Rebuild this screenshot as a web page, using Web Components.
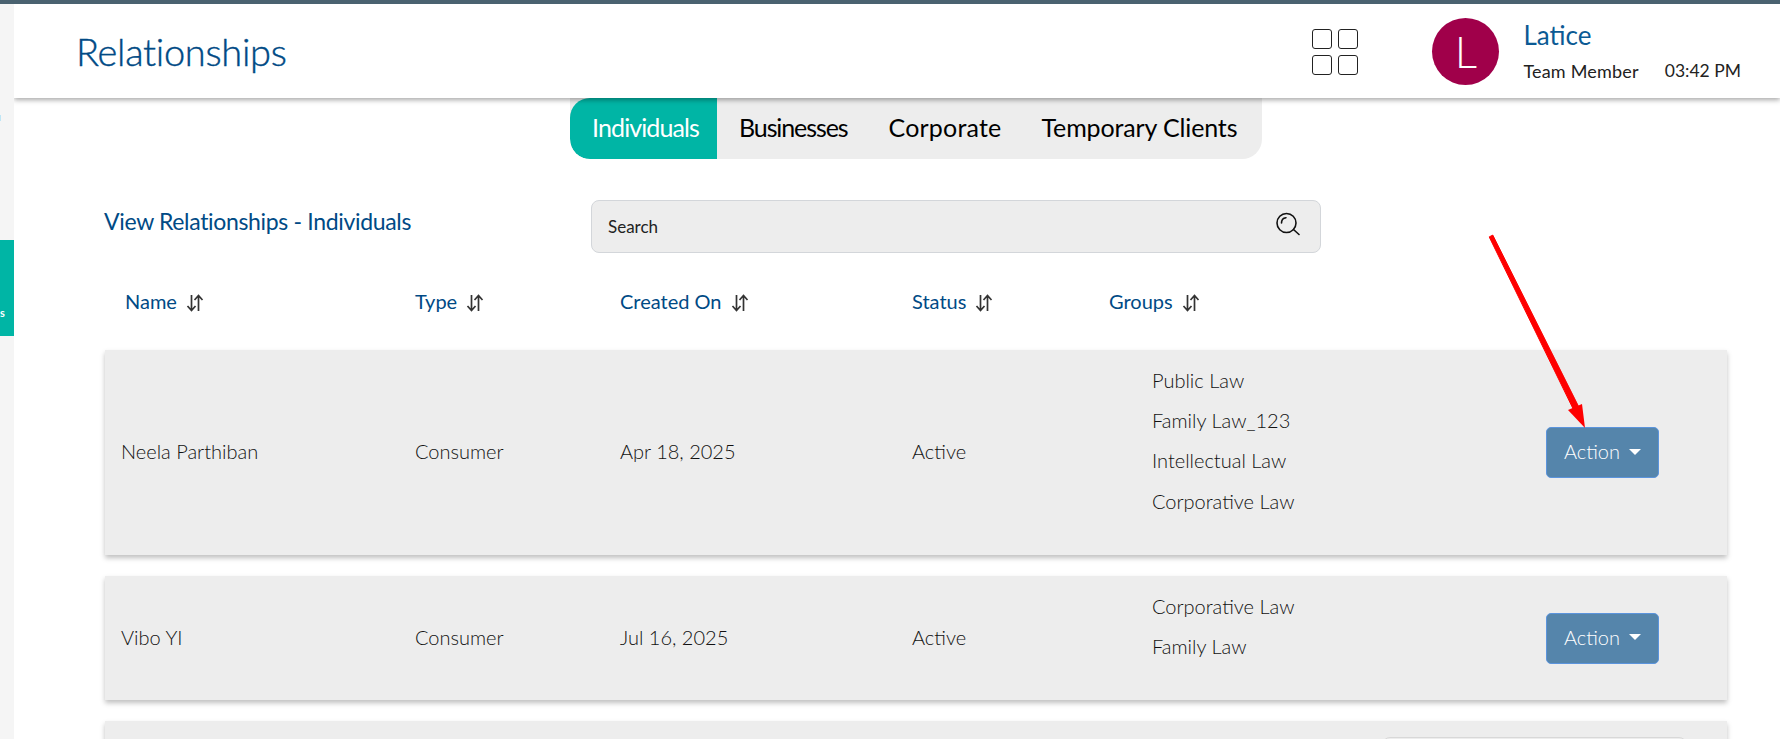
<!DOCTYPE html>
<html>
<head>
<meta charset="utf-8">
<style>
  html,body{margin:0;height:739px;overflow:hidden;background:#fff;font-family:"Lato","Open Sans",sans-serif}
</style>
</head>
<body>
<rel-page>
  <rel-header slot="header" title-text="Relationships" user="Latice" role="Team Member" time="03:42 PM"></rel-header>
  <rel-tabs slot="tabs"></rel-tabs>
  <rel-toolbar slot="toolbar"></rel-toolbar>
  <rel-columns slot="columns"></rel-columns>
  <rel-row name="Neela Parthiban" type="Consumer" date="Apr 18, 2025" status="Active" groups="Public Law|Family Law_123|Intellectual Law|Corporative Law" height="205"></rel-row>
  <rel-row name="Vibo YI" type="Consumer" date="Jul 16, 2025" status="Active" groups="Corporative Law|Family Law" height="124"></rel-row>
  <rel-row height="124" partial></rel-row>
</rel-page>

<script>
const sortIcon = `<svg width="18" height="20" viewBox="0 0 18 20" fill="none" stroke="#333" stroke-width="1.7"><path d="M5.500 2v15M1.500 13l4 4.500 4-4.500"/><path d="M12.500 18V3M8.500 7l4-4.500 4 4.500"/></svg>`;

class RelPage extends HTMLElement {
  constructor() {
    super();
    this.attachShadow({ mode: 'open' });
    this.shadowRoot.innerHTML = `
    <style>
      :host{display:flex;height:739px;overflow:hidden;position:relative;border-top:4px solid #4a6270;box-sizing:border-box}
      .side{width:14px;flex:none;background:#f5f5f5;padding-top:236px;box-sizing:border-box;position:relative;z-index:3}
      .side div{height:96px;background:#00b5a5;color:#fff;font:bold 11px "Lato",sans-serif;display:flex;align-items:flex-end;padding-bottom:17px;box-sizing:border-box;overflow:hidden}
      .side b{position:absolute;left:0;top:111px;width:1px;height:6px;background:#bfe6f5}
      .main{flex:1;min-width:0;display:flex;flex-direction:column}
      .rows{display:flex;flex-direction:column;gap:21px;padding:0 53px 0 91px;flex:none}
      svg.arrow{position:absolute;left:0;top:-4px;pointer-events:none;z-index:4}
    </style>
    <div class="side"><b></b><div>s</div></div>
    <div class="main">
      <slot name="header"></slot>
      <slot name="tabs"></slot>
      <slot name="toolbar"></slot>
      <slot name="columns"></slot>
      <div class="rows"><slot></slot></div>
    </div>
    <svg class="arrow" width="1780" height="739" viewBox="0 0 1780 739">
      <path d="M1489.200 236.900L1492.800 235.100L1579.700 408.700L1574.300 411.300Z" fill="#fe0000" stroke="#fe0000" stroke-width="1" stroke-linejoin="round"/>
      <path d="M1568 410L1582 404L1585 428Z" fill="#fe0000"/>
    </svg>`;
  }
}

class RelHeader extends HTMLElement {
  constructor() {
    super();
    this.attachShadow({ mode: 'open' });
    this.shadowRoot.innerHTML = `
    <style>
      :host{display:flex;align-items:center;flex:none;height:94px;background:#fff;box-shadow:0 2px 5px rgba(0,0,0,.35);position:relative;z-index:2;padding:0 39px 0 62px;box-sizing:border-box}
      h1{margin:0;font:300 38px "Lato",sans-serif;color:#004a85;flex:1;letter-spacing:-.3px;-webkit-text-stroke:.4px #004a85}
      .grid{display:grid;grid-template-columns:20px 20px;gap:6px;margin-right:74px;position:relative;top:1px}
      .grid i{display:block;width:20px;height:20px;border:1.5px solid #222;border-radius:3px;box-sizing:border-box}
      .avatar{width:67px;height:67px;border-radius:50%;background:#a0004a;color:#fff;font:300 44px "Lato",sans-serif;display:flex;align-items:center;justify-content:center;margin-right:24px}
      .who{display:flex;flex-direction:column;gap:10px}
      .name{font:400 26px/30px "Lato",sans-serif;color:#0b5a94}
      .meta{display:flex;gap:26px;font:400 18px/22px "Lato",sans-serif;color:#222}
      .role{letter-spacing:.2px}
      .time{font-size:17.500px}
    </style>
    <h1></h1>
    <div class="grid"><i></i><i></i><i></i><i></i></div>
    <div class="avatar"></div>
    <div class="who"><div class="name"></div><div class="meta"><span class="role"></span><span class="time"></span></div></div>`;
  }
  connectedCallback() {
    const r = this.shadowRoot;
    r.querySelector('h1').textContent = this.getAttribute('title-text');
    const u = this.getAttribute('user');
    r.querySelector('.avatar').textContent = u[0];
    r.querySelector('.name').textContent = u;
    r.querySelector('.role').textContent = this.getAttribute('role');
    r.querySelector('.time').textContent = this.getAttribute('time');
  }
}

class RelTabs extends HTMLElement {
  constructor() {
    super();
    this.attachShadow({ mode: 'open' });
    this.shadowRoot.innerHTML = `
    <style>
      :host{display:flex;flex:none;padding-left:556px}
      .bar{display:flex;width:692px;height:61px;background:#ededed;border-radius:0 0 20px 20px;overflow:hidden;font:400 25px "Lato",sans-serif;color:#000;position:relative}
      .bar div{display:flex;align-items:center;padding-bottom:4px;box-sizing:border-box;white-space:nowrap}
      .on{width:147px;background:#00b5a5;color:#fff;border-radius:20px 0 0 20px;justify-content:center;letter-spacing:-.9px;padding-left:4px}
      .b{margin-left:22px;letter-spacing:-1.1px}
      .c{margin-left:41px;letter-spacing:.2px}
      .t{margin-left:40px;letter-spacing:-.13px}
    </style>
    <div class="bar"><div class="on">Individuals</div><div class="b">Businesses</div><div class="c">Corporate</div><div class="t">Temporary Clients</div></div>`;
  }
}

class RelToolbar extends HTMLElement {
  constructor() {
    super();
    this.attachShadow({ mode: 'open' });
    this.shadowRoot.innerHTML = `
    <style>
      :host{display:flex;flex:none;align-items:center;padding:41px 0 0 90px;height:53px}
      h2{margin:0;width:487px;font:400 23px "Lato",sans-serif;color:#004a85;position:relative;top:-6px;flex:none;letter-spacing:-.33px}
      .search{width:730px;height:53px;box-sizing:border-box;border:1px solid #d3d6da;border-radius:8px;background:#ededed;display:flex;align-items:center;justify-content:space-between;padding:0 20px 0 16px;font:400 17px "Lato",sans-serif;color:#222}
      svg{margin-top:-3px}
    </style>
    <h2>View Relationships - Individuals</h2>
    <div class="search"><span>Search</span>
      <svg width="26" height="26" viewBox="0 0 26 26" fill="none" stroke="#111" stroke-width="1.6" stroke-linecap="round"><circle cx="12.500" cy="11" r="9.500"/><path d="M19.500 17.500l5.500 5"/><path d="M7.500 11c0-3 2-5 4.500-5.300"/></svg>
    </div>`;
  }
}

class RelColumns extends HTMLElement {
  constructor() {
    super();
    this.attachShadow({ mode: 'open' });
    const cols = [['Name', 290], ['Type', 205], ['Created On', 292], ['Status', 197], ['Groups', 150]];
    this.shadowRoot.innerHTML = `
    <style>
      :host{display:flex;flex:none;padding:33px 0 0 111px;height:64px}
      div{display:flex;align-items:flex-start;gap:9px;font:400 20px/30px "Lato",sans-serif;color:#004a85;flex:none}
      svg{margin-top:7px}
    </style>
    ${cols.map(c => `<div style="width:${c[1]}px">${c[0]} ${sortIcon}</div>`).join('')}`;
  }
}

class RelRow extends HTMLElement {
  constructor() {
    super();
    this.attachShadow({ mode: 'open' });
  }
  connectedCallback() {
    const a = n => this.getAttribute(n) || '';
    const groups = a('groups') ? a('groups').split('|') : [];
    const h = a('height');
    if (this.hasAttribute('partial')) {
      this.shadowRoot.innerHTML = `
      <style>
        :host{display:block;flex:none;height:${h}px;background:#ededed;box-shadow:0 3px 5px rgba(0,0,0,.25);position:relative;padding-top:16px;box-sizing:border-box}
        .wide{margin-left:1277px;width:303px;height:40px;background:#ededed;border:1px solid #d8d8d8;border-radius:8px}
      </style><div class="wide"></div>`;
      return;
    }
    this.shadowRoot.innerHTML = `
    <style>
      :host{display:grid;flex:none;grid-template-columns:294px 205px 292px 240px 394px 1fr;align-items:center;height:${h}px;background:#ededed;box-shadow:0 3px 5px rgba(0,0,0,.25);padding-left:16px;box-sizing:border-box;font:300 20px "Lato",sans-serif;color:#111}
      .cell{padding-bottom:3px}
      .groups{display:flex;flex-direction:column;gap:0;align-self:start;padding-top:9.500px}
      .groups div{height:40.400px;line-height:40.400px}
      button{width:113px;height:51px;box-sizing:border-box;background:#5585ab;color:#fff;border:1px solid #5b94dd;border-radius:5px;font:300 20px "Lato",sans-serif;padding:0 0 3px;display:flex;align-items:center;justify-content:center;gap:9px}
      button i{width:0;height:0;border-left:6px solid transparent;border-right:6px solid transparent;border-top:6px solid #fff;margin-top:1px}
    </style>
    <div class="cell">${a('name')}</div><div class="cell">${a('type')}</div><div class="cell">${a('date')}</div><div class="cell">${a('status')}</div>
    <div class="groups">${groups.map(g => `<div>${g}</div>`).join('')}</div>
    <div><button>Action <i></i></button></div>`;
  }
}

customElements.define('rel-page', RelPage);
customElements.define('rel-header', RelHeader);
customElements.define('rel-tabs', RelTabs);
customElements.define('rel-toolbar', RelToolbar);
customElements.define('rel-columns', RelColumns);
customElements.define('rel-row', RelRow);
</script>
</body>
</html>
